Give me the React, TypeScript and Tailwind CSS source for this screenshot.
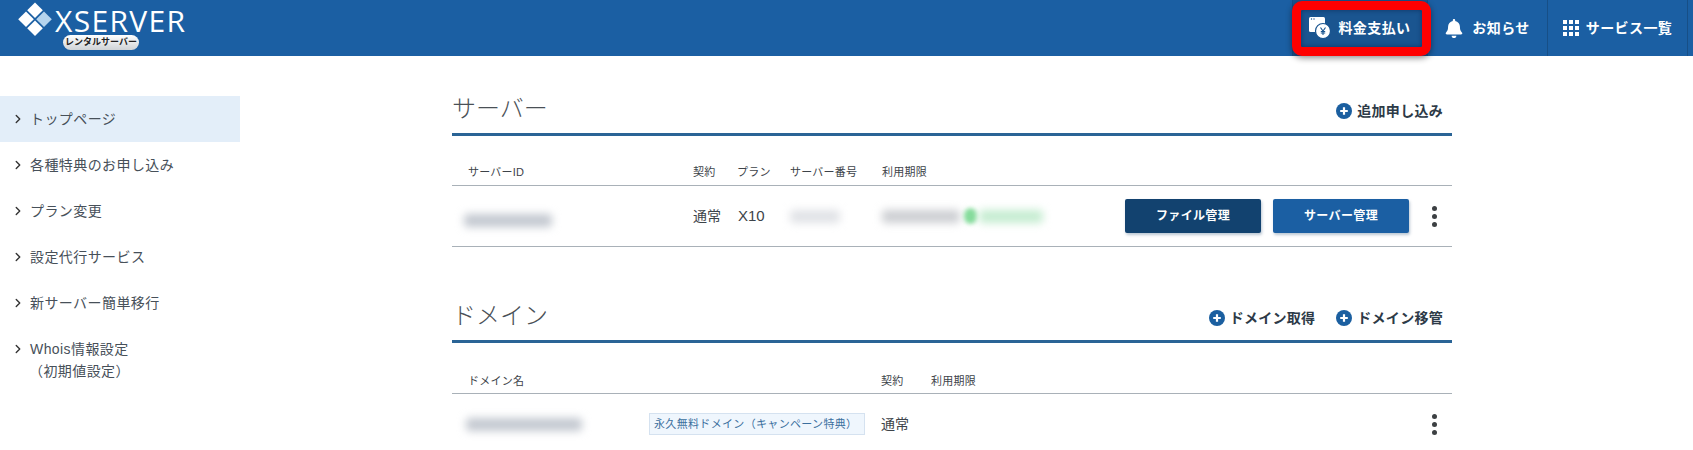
import { ChevronRight } from 'lucide-react'
import { FaBell } from 'react-icons/fa'

const FONT = "font-['Liberation_Sans','Noto_Sans_CJK_JP',sans-serif]"

const menu = ['トップページ', '各種特典のお申し込み', 'プラン変更', '設定代行サービス', '新サーバー簡単移行']

function PlusCircle() {
  return (
    <svg width="16" height="16" viewBox="0 0 16 16" className="flex-shrink-0">
      <circle cx="8" cy="8" r="8" fill="#1b5fa0" />
      <path d="M8 4.2v7.6M4.2 8h7.6" stroke="#fff" strokeWidth="2.2" />
    </svg>
  )
}

function Kebab() {
  return (
    <div className="flex flex-col gap-[3px] w-[4px]">
      <span className="w-[5px] h-[5px] rounded-full bg-[#3c4043]" />
      <span className="w-[5px] h-[5px] rounded-full bg-[#3c4043]" />
      <span className="w-[5px] h-[5px] rounded-full bg-[#3c4043]" />
    </div>
  )
}

function AddLink({ label }: { label: string }) {
  return (
    <a className="flex items-center gap-[5px] text-[14px] font-bold text-[#2d3a47] tracking-[0.02em]">
      <PlusCircle />
      {label}
    </a>
  )
}

function Logo() {
  return (
    <div className="flex items-start pl-[18px]">
      <svg width="38" height="38" viewBox="0 0 38 38" className="mt-[2px] flex-shrink-0">
        <path d="M17 0.5l7.8 7.8-7.8 7.8-7.8-7.8z" fill="#fff" />
        <path d="M8 9.5l7.8 7.8-7.8 7.8-7.8-7.8z" fill="#fff" />
        <path d="M26 9.5l7.8 7.8-7.8 7.8-7.8-7.8z" fill="#b5d4ee" />
        <path d="M17 18.5l7.8 7.8-7.8 7.8-7.8-7.8z" fill="#fff" />
      </svg>
      <div className="flex flex-col items-start -ml-[1px]">
        <span className="font-['Open_Sans',sans-serif] text-[30px] leading-[41px] text-white tracking-[0.045em] whitespace-nowrap">
          XSERVER
        </span>
        <span className="ml-[8px] -mt-[6px] w-[76px] h-[15px] rounded-full bg-gradient-to-b from-white to-[#cfd3d6] text-[9px] leading-[15px] font-bold text-[#222] text-center">
          レンタルサーバー
        </span>
      </div>
    </div>
  )
}

function Header() {
  return (
    <header className="relative h-[56px] bg-[#1b5fa3] flex justify-between pr-[5px]">
      <Logo />
      <nav className="flex text-white font-bold text-[14px] tracking-[0.03em]">
        <div className="w-[135px] flex items-center justify-center gap-[7px] bg-[#1a5590] border-l border-[#174f87]">
          <svg width="22" height="22" viewBox="0 0 22 22">
            <rect x="0" y="0" width="16" height="15" rx="1.5" fill="#fff" />
            <circle cx="2.5" cy="2" r="0.7" fill="#1a5590" />
            <circle cx="5" cy="2" r="0.7" fill="#1a5590" />
            <circle cx="14" cy="14" r="7.5" fill="#fff" stroke="#1a5590" strokeWidth="1.2" />
            <path d="M11.5 10.5l2.5 3.5 2.5-3.5M14 14v4M11.8 14.5h4.4M11.8 16h4.4" stroke="#1a5590" strokeWidth="1.1" fill="none" />
          </svg>
          料金支払い
        </div>
        <div className="w-[120px] flex items-center justify-center gap-[9px] border-l border-[#174f87]">
          <FaBell className="w-[18px] h-[19px]" />
          お知らせ
        </div>
        <div className="w-[141px] flex items-center justify-center gap-[7px] border-x border-[#174f87]">
          <svg width="16" height="16" viewBox="0 0 16 16" fill="#fff">
            <rect x="0" y="0" width="4" height="4" />
            <rect x="6" y="0" width="4" height="4" />
            <rect x="12" y="0" width="4" height="4" />
            <rect x="0" y="6" width="4" height="4" />
            <rect x="6" y="6" width="4" height="4" />
            <rect x="12" y="6" width="4" height="4" />
            <rect x="0" y="12" width="4" height="4" />
            <rect x="6" y="12" width="4" height="4" />
            <rect x="12" y="12" width="4" height="4" />
          </svg>
          サービス一覧
        </div>
      </nav>
      {/* red annotation round the payment button */}
      <div className="absolute left-[1292px] top-[1px] w-[139px] h-[55px] border-[9px] border-[#fe0000] rounded-[10px] shadow-[0_2px_6px_rgba(0,0,0,0.45),inset_0_0_5px_rgba(0,20,60,0.5)]" />
    </header>
  )
}

function Sidebar() {
  return (
    <aside className="w-[240px] flex-shrink-0 pt-[40px] text-[14px] text-[#475059] tracking-[0.03em]">
      {menu.map((item, i) => (
        <div key={item} className={`h-[46px] flex items-center pl-[13px] gap-[5px] ${i === 0 ? 'bg-[#e3eef9]' : ''}`}>
          <ChevronRight className="w-[14px] h-[14px] -ml-[2px] text-[#333]" strokeWidth={2.4} />
          {item}
        </div>
      ))}
      <div className="flex pl-[13px] gap-[5px] pt-[12px] leading-[22px]">
        <ChevronRight className="w-[14px] h-[14px] -ml-[2px] mt-[4px] text-[#333]" strokeWidth={2.4} />
        <div>
          Whois情報設定
          <br />
          <span className="-ml-[1px]">（初期値設定）</span>
        </div>
      </div>
    </aside>
  )
}

function Blur({ w, color = 'bg-[#c3c8d0]' }: { w: string; color?: string }) {
  return <div className={`${w} h-[13px] rounded-sm blur-[4px] ${color}`} />
}

function ServerSection() {
  return (
    <section>
      <div className="flex items-center justify-between h-[39px] border-b-[3px] border-[#2a6496] box-content pb-[5px]">
        <h2 className="text-[24px] font-light text-[#4a5056] leading-[39px]">サーバー</h2>
        <div className="pr-[9px] pt-[5px]">
          <AddLink label="追加申し込み" />
        </div>
      </div>
      <div className="flex items-center h-[50px] pt-[24px] border-b border-[#a9b1b8] text-[11px] text-[#3d4349] tracking-[0.02em]">
        <div className="w-[241px] pl-[16px]">サーバーID</div>
        <div className="w-[44px]">契約</div>
        <div className="w-[53px]">プラン</div>
        <div className="w-[92px]">サーバー番号</div>
        <div>利用期限</div>
      </div>
      <div className="flex items-center h-[61px] border-b border-[#a9b1b8] text-[14px] text-[#3d4349]">
        <div className="w-[241px] pl-[12px] pt-[8px]">
          <Blur w="w-[88px]" />
        </div>
        <div className="w-[44px]">通常</div>
        <div className="w-[53px] text-[15px] font-['Liberation_Sans',sans-serif] pl-[1px]">X10</div>
        <div className="w-[92px]">
          <Blur w="w-[50px]" color="bg-[#e0e2e6]" />
        </div>
        <div className="flex items-center gap-[4px]">
          <Blur w="w-[78px]" color="bg-[#ccced2]" />
          <div className="flex items-center gap-[2px]">
            <span className="w-[13px] h-[16px] rounded-full bg-[#86dc9c] blur-[2px]" />
            <Blur w="w-[64px]" color="bg-[#c4ecd0]" />
          </div>
        </div>
        <div className="ml-auto flex items-center gap-[12px] pr-[16px]">
          <button className="w-[136px] h-[34px] rounded-[2px] bg-[#12426f] text-white text-[12px] font-bold tracking-[0.03em] shadow-[1px_2px_3px_rgba(30,70,110,0.3)]">
            ファイル管理
          </button>
          <button className="w-[136px] h-[34px] rounded-[2px] bg-[#1b5fa3] text-white text-[12px] font-bold tracking-[0.03em] shadow-[1px_2px_3px_rgba(30,70,110,0.3)]">
            サーバー管理
          </button>
          <div className="ml-[11px]">
            <Kebab />
          </div>
        </div>
      </div>
    </section>
  )
}

function DomainSection() {
  return (
    <section className="mt-[49px]">
      <div className="flex items-center justify-between h-[39px] border-b-[3px] border-[#2a6496] box-content pb-[5px]">
        <h2 className="text-[24px] font-light text-[#4a5056] leading-[39px]">ドメイン</h2>
        <div className="flex gap-[21px] pr-[9px] pt-[5px]">
          <AddLink label="ドメイン取得" />
          <AddLink label="ドメイン移管" />
        </div>
      </div>
      <div className="flex items-center h-[51px] pt-[26px] border-b border-[#a9b1b8] text-[11px] text-[#3d4349] tracking-[0.02em]">
        <div className="w-[429px] pl-[16px]">ドメイン名</div>
        <div className="w-[50px]">契約</div>
        <div>利用期限</div>
      </div>
      <div className="flex items-center h-[60px] text-[14px] text-[#3d4349]">
        <div className="w-[197px] pl-[14px]">
          <Blur w="w-[116px]" />
        </div>
        <div className="w-[216px] h-[22px] bg-[#eff6fd] border border-[#d5e2f0] text-[11px] leading-[20px] text-[#3b6f9e] pl-[4px] whitespace-nowrap tracking-[0.03em]">
          永久無料ドメイン（キャンペーン特典）
        </div>
        <div className="ml-[16px]">通常</div>
        <div className="ml-auto pr-[16px]">
          <Kebab />
        </div>
      </div>
    </section>
  )
}

export default function App() {
  return (
    <div className={`${FONT} h-[450px] overflow-hidden bg-white`}>
      <Header />
      <div className="flex">
        <Sidebar />
        <main className="w-[1000px] ml-[212px] pt-[33px]">
          <ServerSection />
          <DomainSection />
        </main>
      </div>
    </div>
  )
}
